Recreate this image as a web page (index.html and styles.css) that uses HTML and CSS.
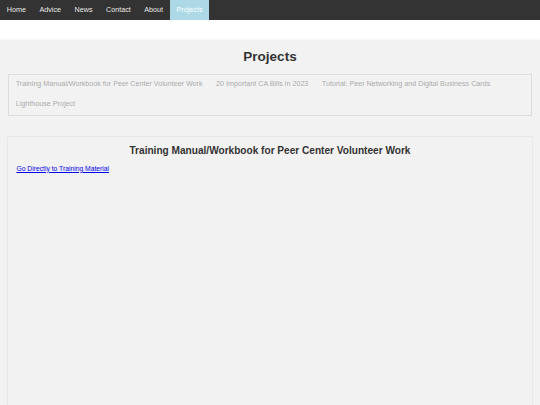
FILE: index.html
```html
<!DOCTYPE html>
<html lang="en">
<head>
<meta charset="utf-8">
<title>Projects</title>
<link rel="stylesheet" href="styles.css">
</head>
<body>
<nav class="topnav">
  <a href="#">Home</a>
  <a href="#">Advice</a>
  <a href="#">News</a>
  <a href="#">Contact</a>
  <a href="#">About</a>
  <a href="#" class="active">Projects</a>
</nav>
<main class="main">
  <h1 class="page-title">Projects</h1>
  <div class="tabs">
    <button class="tab">Training Manual/Workbook for Peer Center Volunteer Work</button>
    <button class="tab">20 Important CA Bills in 2023</button>
    <button class="tab">Tutorial: Peer Networking and Digital Business Cards</button>
    <button class="tab">Lighthouse Project</button>
  </div>
  <section class="card">
    <h2 class="card-title">Training Manual/Workbook for Peer Center Volunteer Work</h2>
    <p class="card-body"><a class="card-link" href="#">Go Directly to Training Material</a></p>
  </section>
</main>
</body>
</html>
```
FILE: styles.css
```css
html, body {
  margin: 0;
  padding: 0;
}
body {
  background: #ffffff;
  font-family: "Liberation Sans", Arial, sans-serif;
  overflow: hidden;
  height: 405px;
}
.topnav {
  display: flex;
  background: #333333;
  height: 20px;
}
.topnav a {
  color: #e8e8e8;
  text-decoration: none;
  font-size: 7.2px;
  line-height: 8.2px;
  padding: 5.9px 6.75px;
}
.topnav a.active {
  background: #add8e6;
  color: #ffffff;
}
.main {
  margin-top: 20px;
  background: #f2f2f2;
  padding: 0 8px;
  display: flow-root;
  box-shadow: 0 0 3px rgba(0, 0, 0, 0.08);
  height: 365px;
  box-sizing: border-box;
}
.page-title {
  text-align: center;
  font-size: 13.5px;
  line-height: 15.5px;
  margin: 9px 0;
  color: #333333;
}
.tabs {
  display: flex;
  flex-wrap: wrap;
  border: 1px solid #dddddd;
}
.tab {
  background: transparent;
  border: none;
  font-family: "Liberation Sans", Arial, sans-serif;
  font-size: 7.17px;
  line-height: 8.25px;
  padding: 5.9px 6.75px;
  color: #ababab;
  cursor: pointer;
}
.card {
  margin-top: 21px;
  background: #f2f2f2;
  box-shadow: 0 0 2px rgba(0, 0, 0, 0.12);
  padding: 0 8.4px;
  display: flow-root;
  height: 280px;
  font-size: 6.75px;
}
.card-title {
  text-align: center;
  font-size: 10.1px;
  line-height: 11.6px;
  margin: 8.4px 0 0;
  color: #333333;
}
.card-body {
  margin: 8px 0 0;
  font-size: 6.75px;
  line-height: 7.8px;
}
.card-link {
  color: #0000ee;
}
```
